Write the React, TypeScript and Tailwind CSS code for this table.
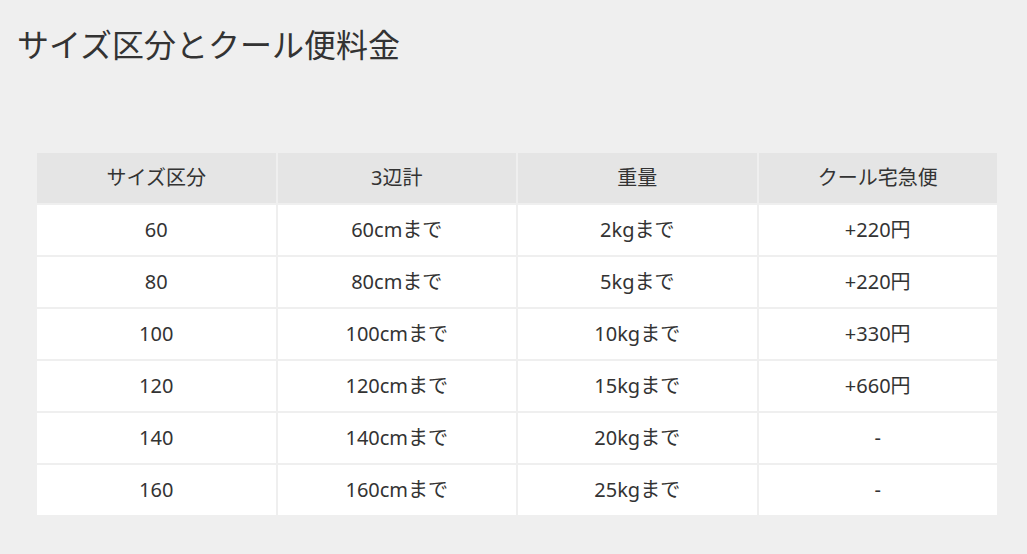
const rows = [
  ["60", "60cmまで", "2kgまで", "+220円"],
  ["80", "80cmまで", "5kgまで", "+220円"],
  ["100", "100cmまで", "10kgまで", "+330円"],
  ["120", "120cmまで", "15kgまで", "+660円"],
  ["140", "140cmまで", "20kgまで", "-"],
  ["160", "160cmまで", "25kgまで", "-"],
];

const headers = ["サイズ区分", "3辺計", "重量", "クール宅急便"];

export default function App() {
  return (
    <div
      className="min-h-[554px] w-[1027px] bg-[#efefef] text-[#333]"
      style={{ fontFamily: '"Noto Sans", "Noto Sans CJK JP", sans-serif' }}
    >
      <h1 className="pl-[17px] pt-[24px] text-[32px] leading-[42px] font-normal">
        サイズ区分とクール便料金
      </h1>
      <div className="ml-[37px] mt-[87px] grid w-[960px] grid-cols-4 gap-[2px]">
        {headers.map((h) => (
          <div
            key={h}
            className="flex h-[50px] items-center justify-center bg-[#e5e5e5] pb-[1px] text-[20px]"
          >
            {h}
          </div>
        ))}
        {rows.map((r) =>
          r.map((c, i) => (
            <div
              key={r[0] + "-" + i}
              className="flex h-[50px] items-center justify-center bg-white pb-[1px] text-[20px]"
            >
              {c}
            </div>
          ))
        )}
      </div>
    </div>
  );
}
